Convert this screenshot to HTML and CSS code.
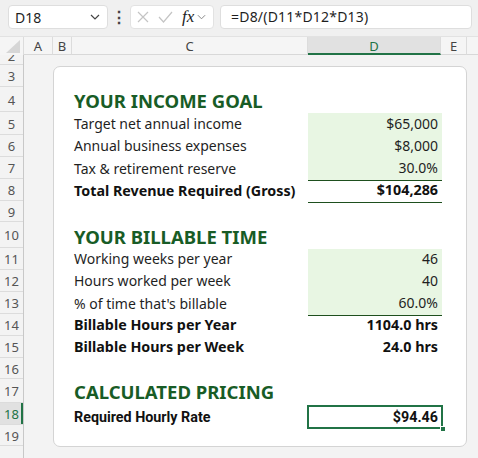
FILE: index.html
```html
<!DOCTYPE html>
<html lang="en">
<head>
  <meta charset="UTF-8">
  <title>Freelance Rate Calculator</title>
  <link rel="stylesheet" href="styles.css">
</head>
<body>
  <div class="formula-bar">
    <div class="name-box">
      <span>D18</span>
      <svg class="chev" width="10" height="6" viewBox="0 0 10 6"><path d="M1 1l4 4 4-4" fill="none" stroke="#444" stroke-width="1.2"/></svg>
    </div>
    <div class="bar-dots">&#8942;</div>
    <div class="fx-box">
      <svg width="12" height="12" viewBox="0 0 12 12"><path d="M1 1l10 10M11 1L1 11" stroke="#c4c4c4" stroke-width="1.2"/></svg>
      <svg width="15" height="12" viewBox="0 0 15 12"><path d="M1 6l4.5 5L14 1" fill="none" stroke="#c4c4c4" stroke-width="1.2"/></svg>
      <span class="fx">fx</span>
      <svg class="chev" width="9" height="6" viewBox="0 0 10 6"><path d="M1 1l4 4 4-4" fill="none" stroke="#888" stroke-width="1.1"/></svg>
    </div>
    <div class="formula-input">=D8/(D11*D12*D13)</div>
  </div>

  <div class="col-headers">
    <div class="corner"><svg width="14" height="13" viewBox="0 0 14 13"><polygon points="14,0 14,13 0,13" fill="#d6d6d6"/></svg></div>
    <div class="col-h col-a">A</div>
    <div class="col-h col-b">B</div>
    <div class="col-h col-c">C</div>
    <div class="col-h col-d active">D</div>
    <div class="col-h col-e">E</div>
    <div class="col-h col-f"></div>
  </div>

  <div class="sheet">
    <div class="row-headers">
      <div class="rh h-part"><span>2</span></div>
      <div class="rh">3</div>
      <div class="rh h-25">4</div>
      <div class="rh h-23">5</div>
      <div class="rh">6</div>
      <div class="rh">7</div>
      <div class="rh">8</div>
      <div class="rh h-21">9</div>
      <div class="rh h-26">10</div>
      <div class="rh">11</div>
      <div class="rh">12</div>
      <div class="rh">13</div>
      <div class="rh">14</div>
      <div class="rh">15</div>
      <div class="rh h-21">16</div>
      <div class="rh h-24">17</div>
      <div class="rh active">18</div>
      <div class="rh h-21">19</div>
      <div class="rh"></div>
    </div>

    <div class="sheet-area">
      <div class="card">
        <div class="row h-21"></div>
        <div class="row h-25"><div class="lbl title">YOUR INCOME GOAL</div></div>
        <div class="row h-23"><div class="lbl">Target net annual income</div><div class="val input">$65,000</div></div>
        <div class="row"><div class="lbl">Annual business expenses</div><div class="val input">$8,000</div></div>
        <div class="row"><div class="lbl">Tax &amp; retirement reserve</div><div class="val input rule">30.0%</div></div>
        <div class="row"><div class="lbl strong">Total Revenue Required (Gross)</div><div class="val strong rule">$104,286</div></div>
        <div class="row h-21"></div>
        <div class="row h-26"><div class="lbl title">YOUR BILLABLE TIME</div></div>
        <div class="row"><div class="lbl">Working weeks per year</div><div class="val input">46</div></div>
        <div class="row"><div class="lbl">Hours worked per week</div><div class="val input">40</div></div>
        <div class="row"><div class="lbl">% of time that's billable</div><div class="val input rule">60.0%</div></div>
        <div class="row"><div class="lbl strong">Billable Hours per Year</div><div class="val strong">1104.0 hrs</div></div>
        <div class="row"><div class="lbl strong">Billable Hours per Week</div><div class="val strong">24.0 hrs</div></div>
        <div class="row h-21"></div>
        <div class="row h-24"><div class="lbl title">CALCULATED PRICING</div></div>
        <div class="row"><div class="lbl narrow">Required Hourly Rate</div><div class="val narrow selected">$94.46<span class="handle"></span></div></div>
        <div class="row h-20"></div>
      </div>
    </div>
  </div>
</body>
</html>
```

FILE: styles.css
```css
* {
  box-sizing: border-box;
}
html, body {
  margin: 0;
  padding: 0;
  width: 478px;
  height: 458px;
  overflow: hidden;
  background: #f3f3f3;
  font-family: "Noto Sans", "Open Sans", sans-serif;
  color: #1f1f1f;
}

/* formula bar */
.formula-bar {
  height: 37px;
  display: flex;
  align-items: flex-start;
  padding: 5px 0 0 8px;
  background: #f0f0f0;
  border-bottom: 1px solid #e2e2e2;
}
.name-box {
  width: 100px;
  height: 24px;
  display: flex;
  align-items: center;
  justify-content: space-between;
  padding: 0 7px 0 6px;
  background: #fff;
  border: 1px solid #dedede;
  border-radius: 4px;
  font-size: 14px;
}
.bar-dots {
  width: 22px;
  height: 24px;
  line-height: 24px;
  text-align: center;
  font-size: 16px;
  font-weight: bold;
  color: #444;
}
.fx-box {
  width: 84px;
  height: 24px;
  display: flex;
  align-items: center;
  gap: 9px;
  padding: 0 0 0 6px;
  background: #fff;
  border: 1px solid #e2e2e2;
  border-radius: 4px;
}
.fx-box .fx {
  font-family: "Liberation Serif", serif;
  font-style: italic;
  font-size: 17px;
  color: #222;
  margin-right: -6px;
}
.formula-input {
  width: 252px;
  height: 24px;
  margin-left: 6px;
  padding: 0 0 0 10px;
  line-height: 22px;
  background: #fff;
  border: 1px solid #dedede;
  border-radius: 4px;
  font-size: 14px;
  letter-spacing: 0.2px;
}

/* column headers */
.col-headers {
  display: flex;
  height: 18px;
  background: #f5f5f5;
  font-size: 13px;
  color: #444;
}
.corner {
  width: 24px;
  display: flex;
  align-items: flex-end;
  justify-content: flex-end;
  padding: 0 3px 2px 0;
  border-right: 1px solid #dcdcdc;
}
.col-h {
  line-height: 18px;
  text-align: center;
  border-right: 1px solid #dcdcdc;
  border-bottom: 1px solid #d8d8d8;
}
.col-a { width: 29px; }
.col-b { width: 19px; }
.col-c { width: 236px; }
.col-d { width: 133px; }
.col-e { width: 26px; }
.col-f { flex: 1; border-right: none; }
.col-h.active {
  background: #e1e1e1;
  color: #217346;
  border-bottom: 2px solid #217346;
}

/* sheet body */
.sheet {
  display: flex;
}
.row-headers {
  width: 24px;
  flex: none;
  background: #f3f3f3;
  border-right: 1px solid #c8c8c8;
  font-size: 13px;
  color: #555;
}
.rh {
  height: 22px;
  display: flex;
  align-items: center;
  justify-content: center;
  padding-top: 1px;
  border-bottom: 1px solid #dcdcdc;
}
.rh.h-part {
  height: 10px;
  overflow: hidden;
  align-items: flex-end;
}
.rh.h-part span {
  line-height: 10px;
  margin-bottom: 3px;
}
.rh.active {
  background: #e1e1e1;
  color: #217346;
  box-shadow: inset -2px 0 0 #217346;
}
.h-20 { height: 20px !important; }
.h-21 { height: 21px !important; }
.h-23 { height: 23px !important; }
.h-24 { height: 24px !important; }
.h-25 { height: 25px !important; }
.h-26 { height: 26px !important; }

.sheet-area {
  flex: 1;
  padding: 11px 0 0 29px;
}
.card {
  width: 414px;
  background: #fff;
  border: 1px solid #d4d4d4;
  border-radius: 7px;
}

/* cells inside the card */
.row {
  height: 22px;
  display: grid;
  grid-template-columns: 18px 236px 134px 24px;
  align-items: stretch;
}
.lbl {
  grid-column: 2;
  display: flex;
  align-items: flex-end;
  padding: 0 0 2px 2px;
  font-size: 14px;
  line-height: 20px;
  white-space: nowrap;
}
.val {
  grid-column: 3;
  position: relative;
  display: flex;
  align-items: flex-end;
  justify-content: flex-end;
  padding: 0 4px 2px 0;
  font-size: 14px;
  line-height: 20px;
  white-space: nowrap;
}
.title {
  font-size: 18.5px;
  font-weight: bold;
  color: #185c26;
  padding-bottom: 2px;
}
.strong {
  font-size: 14.3px;
  font-weight: bold;
  color: #111;
}
.input {
  background: #e8f6e3;
}
.rule {
  border-bottom: 1px solid #1e4f1e;
}
.narrow {
  font-family: Roboto, sans-serif;
  font-weight: bold;
  font-size: 14.3px;
  letter-spacing: 0;
  color: #111;
}
.selected {
  margin: 1px -1px 0 -1px;
  border: 2px solid #217346;
  padding: 0 3px 0 0;
}
.handle {
  position: absolute;
  right: -5px;
  bottom: -5px;
  width: 6px;
  height: 6px;
  background: #217346;
  border: 1px solid #fff;
}
```
